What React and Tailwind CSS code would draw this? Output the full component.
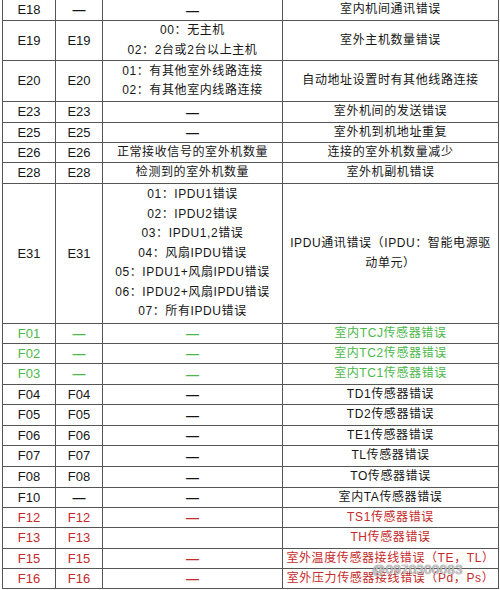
import React from "react";

const GREEN = "text-[#4cb84a]";
const RED = "text-[#c62a2a]";
const DARK = "text-[#161616]";

const rows = [
  { a: "E18", b: "—", c: "—", d: "室内机间通讯错误", h: "h-[21px]" },
  { a: "E19", b: "E19", c: ["00：无主机", "02：2台或2台以上主机"], d: "室外主机数量错误", h: "h-[40px]" },
  { a: "E20", b: "E20", c: ["01：有其他室外线路连接", "02：有其他室内线路连接"], d: "自动地址设置时有其他线路连接", h: "h-[41px]" },
  { a: "E23", b: "E23", c: "—", d: "室外机间的发送错误", h: "h-[21px]" },
  { a: "E25", b: "E25", c: "—", d: "室外机到机地址重复", h: "h-[20px]" },
  { a: "E26", b: "E26", c: "正常接收信号的室外机数量", d: "连接的室外机数量减少", h: "h-[20px]" },
  { a: "E28", b: "E28", c: "检测到的室外机数量", d: "室外机副机错误", h: "h-[21px]" },
  {
    a: "E31",
    b: "E31",
    c: [
      "01：IPDU1错误",
      "02：IPDU2错误",
      "03：IPDU1,2错误",
      "04：风扇IPDU错误",
      "05：IPDU1+风扇IPDU错误",
      "06：IPDU2+风扇IPDU错误",
      "07：所有IPDU错误",
    ],
    d: ["IPDU通讯错误（IPDU：智能电源驱", "动单元）"],
    h: "h-[140px]",
  },
  { a: "F01", b: "—", c: "—", d: "室内TCJ传感器错误", h: "h-[20px]", color: GREEN },
  { a: "F02", b: "—", c: "—", d: "室内TC2传感器错误", h: "h-[20px]", color: GREEN },
  { a: "F03", b: "—", c: "—", d: "室内TC1传感器错误", h: "h-[21px]", color: GREEN },
  { a: "F04", b: "F04", c: "—", d: "TD1传感器错误", h: "h-[20px]" },
  { a: "F05", b: "F05", c: "—", d: "TD2传感器错误", h: "h-[21px]" },
  { a: "F06", b: "F06", c: "—", d: "TE1传感器错误", h: "h-[20px]" },
  { a: "F07", b: "F07", c: "—", d: "TL传感器错误", h: "h-[21px]" },
  { a: "F08", b: "F08", c: "—", d: "TO传感器错误", h: "h-[21px]" },
  { a: "F10", b: "—", c: "—", d: "室内TA传感器错误", h: "h-[20px]" },
  { a: "F12", b: "F12", c: "—", d: "TS1传感器错误", h: "h-[20px]", color: RED },
  { a: "F13", b: "F13", c: "", d: "TH传感器错误", h: "h-[21px]", color: RED },
  { a: "F15", b: "F15", c: "—", d: "室外温度传感器接线错误（TE，TL）", h: "h-[20px]", color: RED },
  { a: "F16", b: "F16", c: "—", d: "室外压力传感器接线错误（Pd，Ps）", h: "h-[20px]", color: RED },
];

const Cell = ({ value, w, last }) => {
  const lines = Array.isArray(value) ? value : [value];
  return (
    <div
      className={`${w} shrink-0 h-full flex flex-col items-center justify-center text-center border-r border-[#555] ${
        last ? "" : ""
      }`}
    >
      {lines.map((line, i) =>
        line === "—" ? (
          <span key={i} className="font-bold text-[13px] leading-[19px]">
            —
          </span>
        ) : (
          <span key={i} className="text-[12px] leading-[19.5px] tracking-[0.6px] whitespace-nowrap">
            {line}
          </span>
        )
      )}
    </div>
  );
};

export default function App() {
  return (
    <div
      className="relative w-[500px] h-[590px] bg-white overflow-hidden"
      style={{ fontFamily: '"Liberation Sans", "Noto Sans CJK SC", sans-serif' }}
    >
      <div className="ml-[2px] -mt-px w-[497px] border-l border-t border-[#555]">
        {rows.map((r) => (
          <div key={r.a} className={`flex border-b border-[#555] ${r.h} ${r.color || DARK}`}>
            <div className="w-[53px] shrink-0 h-full flex items-center justify-center border-r border-[#555] text-[13px]">
              {r.a}
            </div>
            <div
              className={`w-[47px] shrink-0 h-full flex items-center justify-center border-r border-[#555] ${
                r.b === "—" ? "font-bold text-[13px]" : "text-[13px]"
              }`}
            >
              {r.b}
            </div>
            <Cell value={r.c} w="w-[180px]" />
            <Cell value={r.d} w="w-[216px]" last />
          </div>
        ))}
      </div>
      <div className="absolute left-[372px] top-[560px] text-[13px] tracking-[0.5px] text-white/70 [text-shadow:0_0_1px_#666,0_0_1px_#666]">
        @0970300083
      </div>
    </div>
  );
}
